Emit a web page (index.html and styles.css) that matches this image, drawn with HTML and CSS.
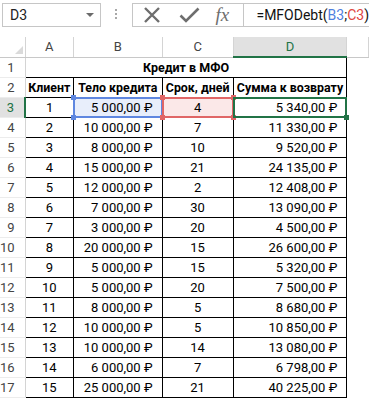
FILE: index.html
```html
<!DOCTYPE html>
<html>
<head>
    <title>Кредит в МФО</title>
    <link rel="stylesheet" href="styles.css">
</head>
<body>
    <div class="formula-bar">
        <div class="name-box">
            <span class="name-text">D3</span>
            <span class="name-arrow"></span>
        </div>
        <div class="grip"><i></i><i></i><i></i></div>
        <div class="formula-box">
            <div class="fx-buttons">
                <svg class="btn-icon" width="18" height="18" viewBox="0 0 18 18">
                    <path d="M2 2 L16 16 M16 2 L2 16" stroke="#6e6e6e" stroke-width="2.4" fill="none"/>
                </svg>
                <svg class="btn-icon check" width="21" height="18" viewBox="0 0 21 18">
                    <path d="M1.5 9.5 L7 15 L19.5 2.5" stroke="#6e6e6e" stroke-width="2.6" fill="none"/>
                </svg>
                <span class="fx">fx</span>
            </div>
            <div class="formula-input">=MFODebt(<span class="ref-b">B3</span>;<span class="ref-c">C3</span>)</div>
        </div>
    </div>

    <table class="sheet">
        <colgroup>
            <col class="w-row">
            <col class="w-a">
            <col class="w-b">
            <col class="w-c">
            <col class="w-d">
            <col class="w-e">
        </colgroup>
        <tr class="col-heads">
            <th class="corner"><span class="corner-tri"></span></th>
            <th>A</th>
            <th>B</th>
            <th>C</th>
            <th class="active">D</th>
            <th></th>
        </tr>
        <tr>
            <th class="row-num">1</th>
            <td colspan="4" class="title">Кредит в МФО</td>
            <td class="blank"></td>
        </tr>
        <tr class="heads">
            <th class="row-num">2</th>
            <td>Клиент</td>
            <td>Тело кредита</td>
            <td>Срок, дней</td>
            <td>Сумма к возврату</td>
            <td class="blank"></td>
        </tr>
        <tr>
            <th class="row-num active">3</th>
            <td class="num">1</td>
            <td class="money sel-b">5 000,00 ₽<i class="h tl"></i><i class="h tr"></i><i class="h bl"></i><i class="h br"></i></td>
            <td class="num sel-c">4<i class="h tl"></i><i class="h tr"></i><i class="h bl"></i><i class="h br"></i></td>
            <td class="money sel-d">5 340,00 ₽<i class="h br"></i></td>
            <td class="blank"></td>
        </tr>
        <tr><th class="row-num">4</th><td class="num">2</td><td class="money">10 000,00 ₽</td><td class="num">7</td><td class="money">11 330,00 ₽</td><td class="blank"></td></tr>
        <tr><th class="row-num">5</th><td class="num">3</td><td class="money">8 000,00 ₽</td><td class="num">10</td><td class="money">9 520,00 ₽</td><td class="blank"></td></tr>
        <tr><th class="row-num">6</th><td class="num">4</td><td class="money">15 000,00 ₽</td><td class="num">21</td><td class="money">24 135,00 ₽</td><td class="blank"></td></tr>
        <tr><th class="row-num">7</th><td class="num">5</td><td class="money">12 000,00 ₽</td><td class="num">2</td><td class="money">12 408,00 ₽</td><td class="blank"></td></tr>
        <tr><th class="row-num">8</th><td class="num">6</td><td class="money">7 000,00 ₽</td><td class="num">30</td><td class="money">13 090,00 ₽</td><td class="blank"></td></tr>
        <tr><th class="row-num">9</th><td class="num">7</td><td class="money">3 000,00 ₽</td><td class="num">20</td><td class="money">4 500,00 ₽</td><td class="blank"></td></tr>
        <tr><th class="row-num">10</th><td class="num">8</td><td class="money">20 000,00 ₽</td><td class="num">15</td><td class="money">26 600,00 ₽</td><td class="blank"></td></tr>
        <tr><th class="row-num">11</th><td class="num">9</td><td class="money">5 000,00 ₽</td><td class="num">15</td><td class="money">5 320,00 ₽</td><td class="blank"></td></tr>
        <tr><th class="row-num">12</th><td class="num">10</td><td class="money">5 000,00 ₽</td><td class="num">20</td><td class="money">7 500,00 ₽</td><td class="blank"></td></tr>
        <tr><th class="row-num">13</th><td class="num">11</td><td class="money">8 000,00 ₽</td><td class="num">5</td><td class="money">8 680,00 ₽</td><td class="blank"></td></tr>
        <tr><th class="row-num">14</th><td class="num">12</td><td class="money">10 000,00 ₽</td><td class="num">5</td><td class="money">10 850,00 ₽</td><td class="blank"></td></tr>
        <tr><th class="row-num">15</th><td class="num">13</td><td class="money">10 000,00 ₽</td><td class="num">14</td><td class="money">13 080,00 ₽</td><td class="blank"></td></tr>
        <tr><th class="row-num">16</th><td class="num">14</td><td class="money">6 000,00 ₽</td><td class="num">7</td><td class="money">6 798,00 ₽</td><td class="blank"></td></tr>
        <tr><th class="row-num">17</th><td class="num">15</td><td class="money">25 000,00 ₽</td><td class="num">21</td><td class="money">40 225,00 ₽</td><td class="blank"></td></tr>
    </table>
</body>
</html>
```

FILE: styles.css
```css
body {
    margin: 0;
    background: #fff;
    overflow: hidden;
    font-family: Roboto, "Noto Sans", sans-serif;
}

/* formula bar */
.formula-bar {
    display: flex;
    align-items: flex-start;
    height: 37px;
    padding: 3px 0 0 2px;
    box-sizing: border-box;
}

.name-box {
    display: flex;
    align-items: center;
    justify-content: space-between;
    width: 100px;
    height: 24px;
    border: 1px solid #c6c6c6;
    box-sizing: border-box;
    padding: 0 6px 0 7px;
}

.name-text {
    font-size: 14px;
    color: #222;
}

.name-arrow {
    width: 0;
    height: 0;
    border-left: 4px solid transparent;
    border-right: 4px solid transparent;
    border-top: 4px solid #6a6a6a;
}

.grip {
    display: flex;
    flex-direction: column;
    gap: 2px;
    margin: 6px 0 0 14px;
}

.grip i {
    display: block;
    width: 2px;
    height: 2px;
    background: #a8a8a8;
}

.formula-box {
    display: flex;
    flex: 1;
    height: 24px;
    margin-left: 15px;
    border: 1px solid #c6c6c6;
    border-right: none;
    box-sizing: border-box;
}

.fx-buttons {
    display: flex;
    align-items: center;
    width: 111px;
    padding-left: 10px;
    border-right: 1px solid #c6c6c6;
    box-sizing: border-box;
}

.btn-icon {
    display: block;
}

.check {
    margin-left: 18px;
}

.fx {
    font-family: "Liberation Serif", serif;
    font-style: italic;
    font-size: 19px;
    color: #6e6e6e;
    margin-left: 15px;
}

.formula-input {
    padding-left: 12px;
    font-size: 14px;
    line-height: 22px;
    color: #111;
    white-space: nowrap;
}

.ref-b {
    color: #4f7fe0;
}

.ref-c {
    color: #e0473f;
}

/* sheet */
.sheet {
    border-collapse: collapse;
    table-layout: fixed;
    font-size: 13px;
    color: #000;
}

.w-row { width: 21px; }
.w-a { width: 53px; }
.w-b { width: 96px; }
.w-c { width: 77px; }
.w-d { width: 119px; }
.w-e { width: 40px; }

.sheet tr {
    height: 20px;
}

.sheet th,
.sheet td {
    padding: 0;
    white-space: nowrap;
    overflow: visible;
}

.col-heads th {
    font-weight: normal;
    color: #444;
    border-right: 1px solid #d4d4d4;
    border-bottom: 1px solid #c8c8c8;
    text-align: center;
}

.col-heads th.active {
    background: #e1e1e1;
    color: #217346;
    border-bottom: 2px solid #217346;
}

.corner {
    position: relative;
}

.corner-tri {
    position: absolute;
    right: 2px;
    bottom: 3px;
    width: 0;
    height: 0;
    border-left: 8px solid transparent;
    border-bottom: 8px solid #dadada;
}

.row-num {
    font-weight: normal;
    color: #444;
    text-align: right;
    padding-right: 10px !important;
    border-right: 1px solid #d4d4d4;
    border-bottom: 1px solid #ececec;
}

.row-num.active {
    background: #e1e1e1;
    color: #217346;
    border-right: 2px solid #217346;
}

.sheet td {
    border: 1px solid #000;
}

.sheet td.blank {
    border: none;
}

.title {
    font-weight: bold;
    font-size: 12.5px;
    text-align: center;
    border-top-color: #c8c8c8 !important;
    border-left-color: #d4d4d4 !important;
}

.heads td {
    font-weight: bold;
    font-size: 12.4px;
    text-align: center;
}

.heads td:first-of-type {
    border-left-color: #d4d4d4;
}

.num {
    text-align: center;
}

.money {
    text-align: right;
    padding-right: 9px !important;
}

/* selection marks */
.sel-b,
.sel-c,
.sel-d {
    position: relative;
}

.sel-b { background: #e8eefb; }
.sel-c { background: #fbe8e8; }

.sel-b::before,
.sel-c::before,
.sel-d::before {
    content: "";
    position: absolute;
    left: -1px;
    top: -1px;
    right: -1px;
    bottom: -1px;
    border: 2px solid #5f87e0;
}

.sel-c::before { border-color: #e06666; }
.sel-d::before { border-color: #217346; }

.h {
    position: absolute;
    width: 5px;
    height: 5px;
    background: #5f87e0;
}

.sel-c .h { background: #e06666; }
.sel-d .h { background: #217346; }

.tl { left: -3px; top: -3px; }
.tr { right: -3px; top: -3px; }
.bl { left: -3px; bottom: -3px; }
.br { right: -3px; bottom: -3px; }
```
